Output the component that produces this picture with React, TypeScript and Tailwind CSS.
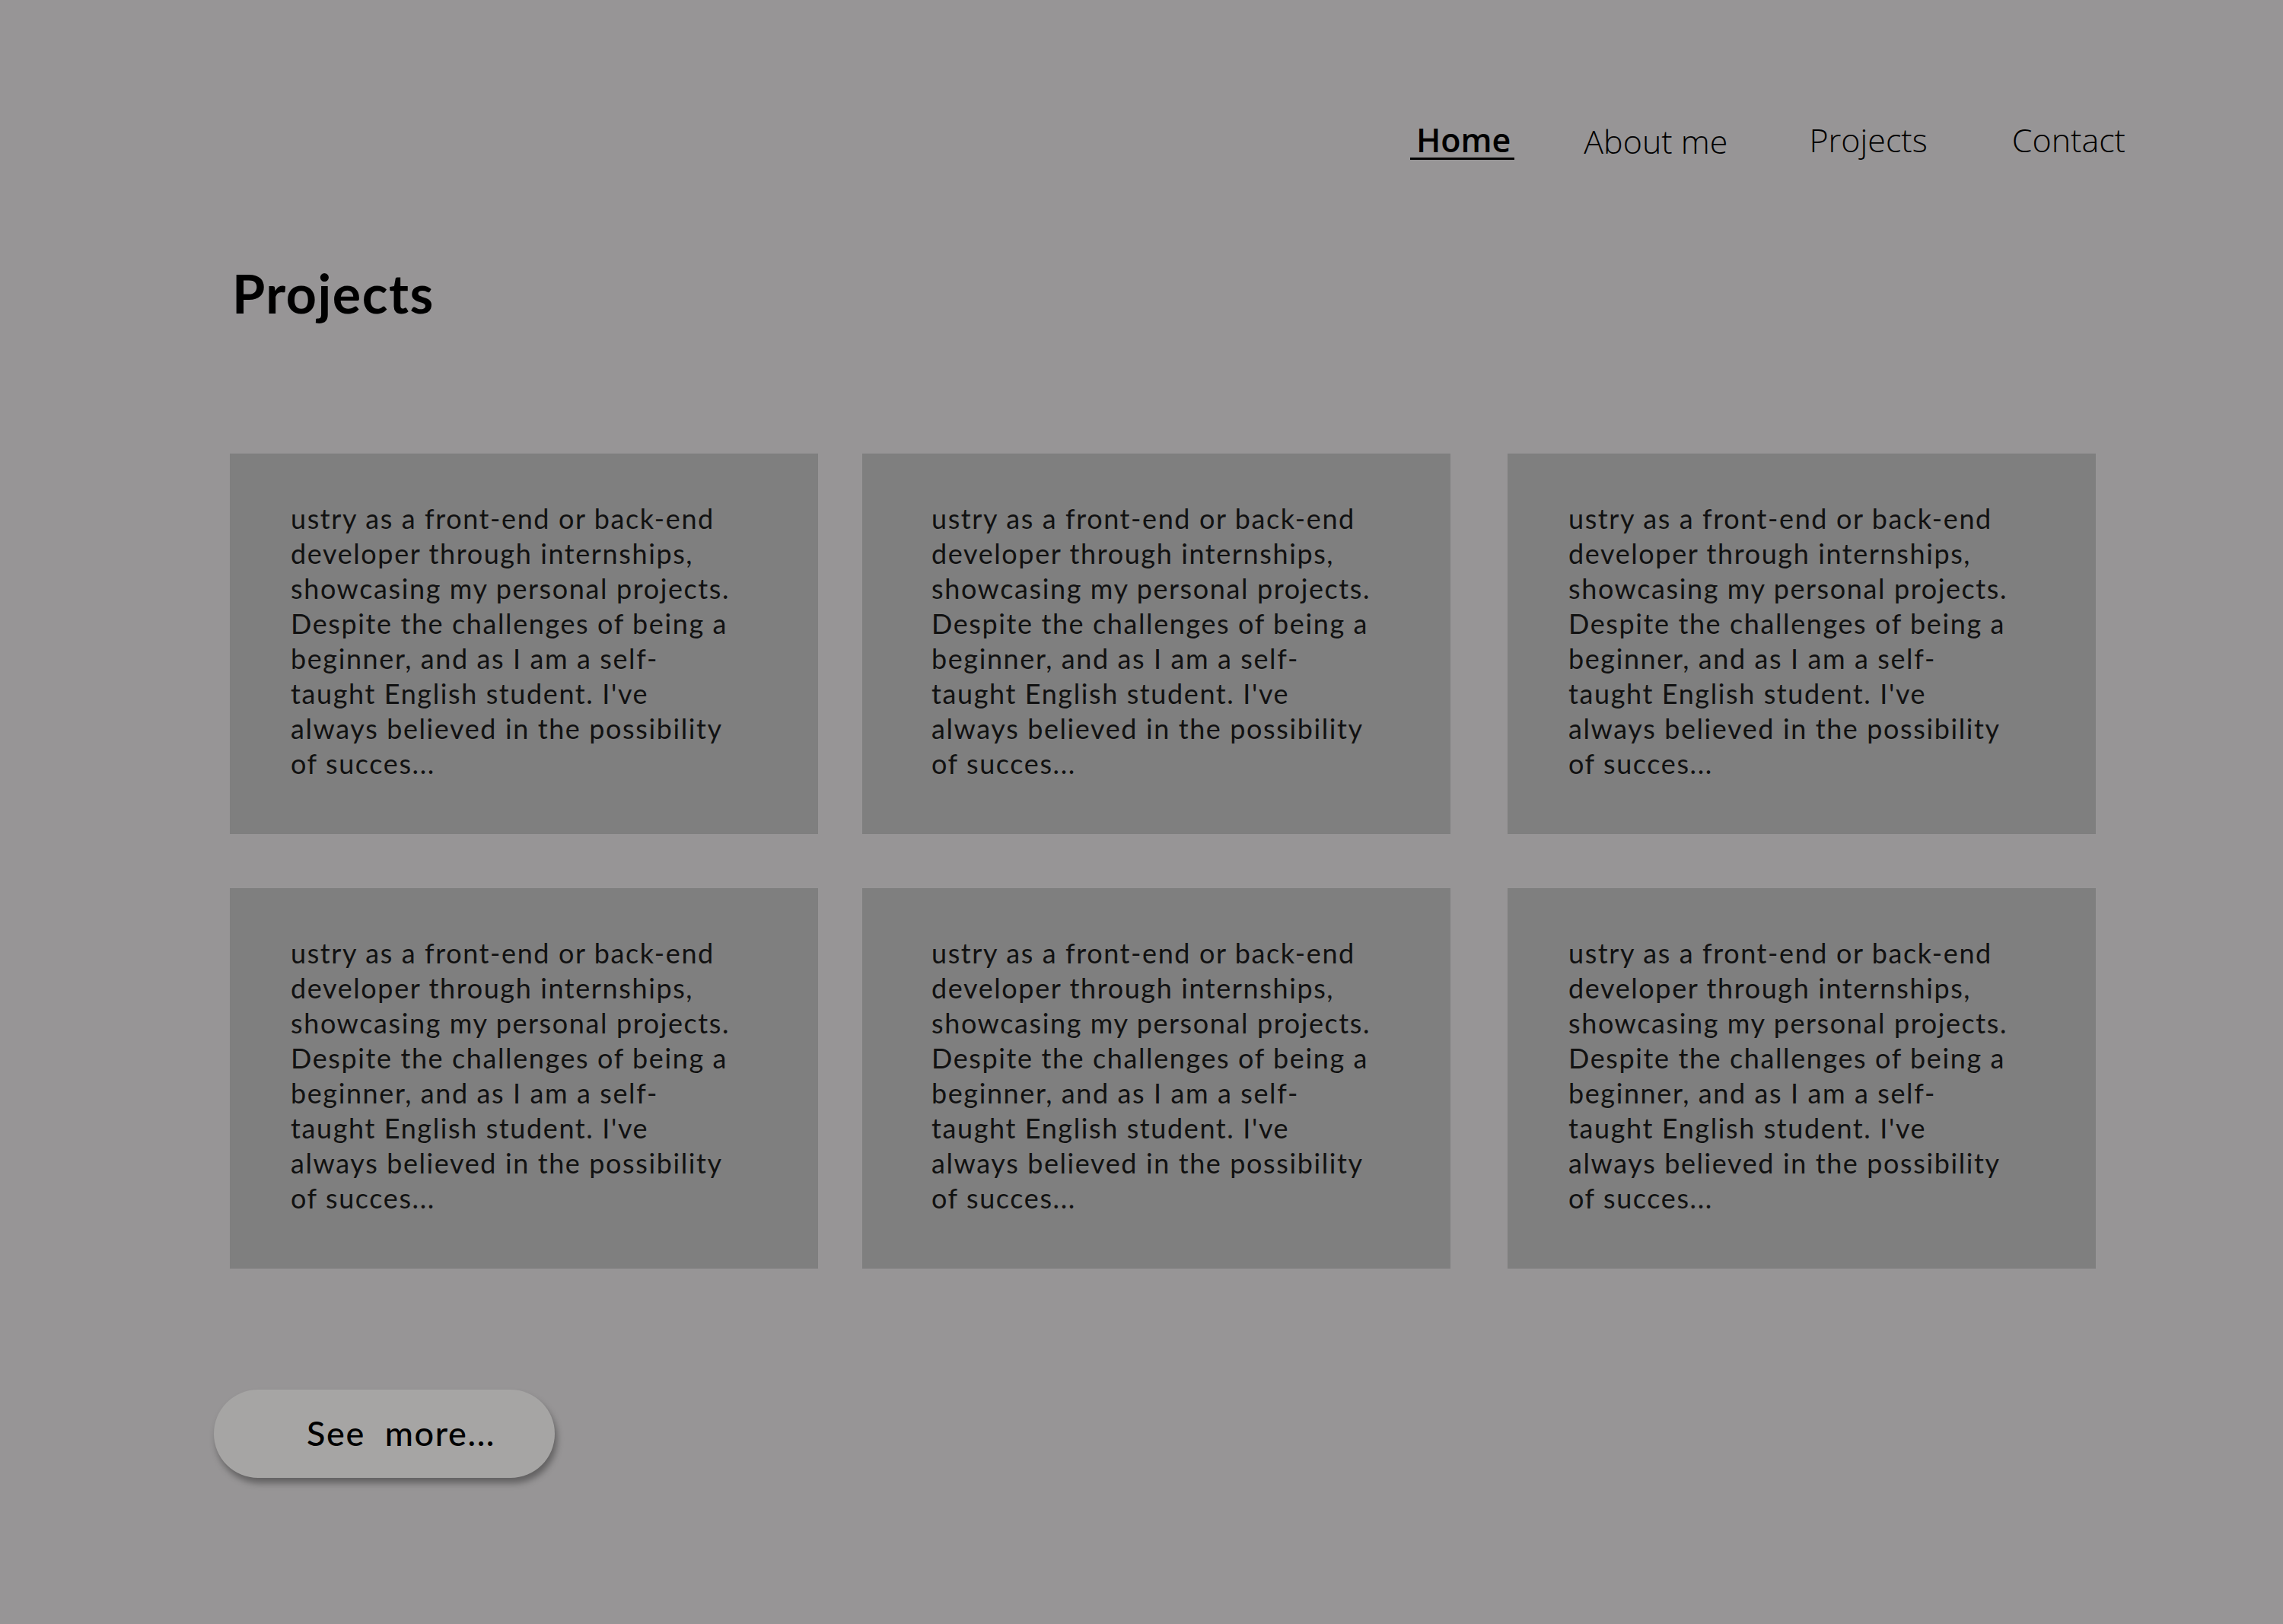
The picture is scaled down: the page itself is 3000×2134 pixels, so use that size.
import React from 'react';

const lines = [
  'ustry as a front-end or back-end',
  'developer through internships,',
  'showcasing my personal projects.',
  'Despite the challenges of being a',
  'beginner, and as I am a self-',
  "taught English student. I've",
  'always believed in the possibility',
  'of succes...',
];

const ProjectCard = ({ className }: { className: string }) => {
  return (
    <div className={`w-[773px] h-[500px] bg-[#7f7f7f] pt-[62px] ${className}`}>
      <p className="text-[36px] leading-[46px] tracking-[1.6px] text-[#111] whitespace-nowrap">
        {lines.map((line) => (
          <span key={line} className="block">
            {line}
          </span>
        ))}
      </p>
    </div>
  );
};

const App = () => {
  return (
    <div className="min-h-screen bg-[#979596] font-['Lato',sans-serif] text-black">
      {/* Nav */}
      <nav className="flex justify-end items-start pt-[162px] pr-[207px] font-['Open_Sans',sans-serif] text-[43px] leading-[44px]">
        <a className="font-semibold border-b-[3px] border-black pb-[1px] pl-[8px] pr-[5px] -mr-[5px]">Home</a>
        <a className="ml-[96px] font-light pt-[2px]">About me</a>
        <a className="ml-[107px] font-light">Projects</a>
        <a className="ml-[111px] font-light">Contact</a>
      </nav>

      {/* Title */}
      <h1 className="ml-[305px] mt-[141px] text-[70px] leading-[68px] font-bold tracking-[1.5px]">Projects</h1>

      {/* Cards */}
      <div className="ml-[302px] mt-[177px] flex flex-col gap-[71px]">
        {[0, 1].map((row) => (
          <div key={row} className="flex">
            <ProjectCard className="pl-[80px]" />
            <ProjectCard className="ml-[58px] pl-[91px]" />
            <ProjectCard className="ml-[75px] pl-[80px]" />
          </div>
        ))}
      </div>

      {/* See more */}
      <button className="ml-[281px] mt-[159px] w-[448px] h-[116px] rounded-full bg-[#a6a5a4] shadow-[3px_7px_9px_rgba(0,0,0,0.35)] pl-[122px] text-left text-[45px] font-medium tracking-[1.6px] whitespace-pre">
        See  more...
      </button>
    </div>
  );
};

export default App;
